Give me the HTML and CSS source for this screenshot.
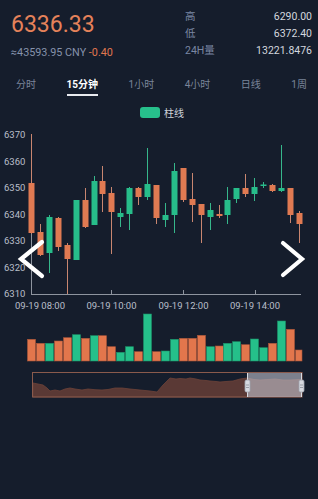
FILE: index.html
```html
<!DOCTYPE html>
<html lang="zh">
<head>
<meta charset="utf-8">
<title>K线</title>
<link rel="stylesheet" href="styles.css">
</head>
<body>
<div class="app">
  <header class="ticker">
    <div class="price-block">
      <div class="price">6336.33</div>
      <div class="sub"><span class="cny">≈43593.95 CNY</span> <span class="chg">-0.40</span></div>
    </div>
    <dl class="stats">
      <dt>高</dt><dd>6290.00</dd>
      <dt>低</dt><dd>6372.40</dd>
      <dt>24H量</dt><dd>13221.8476</dd>
    </dl>
  </header>

  <nav class="tabs">
    <span class="tab">分时</span>
    <span class="tab active">15分钟</span>
    <span class="tab">1小时</span>
    <span class="tab">4小时</span>
    <span class="tab">日线</span>
    <span class="tab">1周</span>
  </nav>

  <div class="legend"><span class="swatch"></span><span class="legend-text">柱线</span></div>

  <div class="chart">
    <svg class="chart-svg" width="318" height="290" viewBox="0 120 318 290" xmlns="http://www.w3.org/2000/svg">
      <!-- y axis labels -->
      <g class="axis-label">
        <text x="4" y="138.4">6370</text>
        <text x="4" y="164.9">6360</text>
        <text x="4" y="191.4">6350</text>
        <text x="4" y="217.9">6340</text>
        <text x="4" y="244.4">6330</text>
        <text x="4" y="270.9">6320</text>
        <text x="4" y="297.4">6310</text>
      </g>
      <g class="axis-label mid">
        <text x="40" y="308.5">09-19 08:00</text>
        <text x="111.5" y="308.5">09-19 10:00</text>
        <text x="183.5" y="308.5">09-19 12:00</text>
        <text x="255" y="308.5">09-19 14:00</text>
      </g>
      <!-- axes -->
      <g class="axis">
        <line x1="31.5" y1="134" x2="31.5" y2="294.5"/>
        <line x1="31" y1="294.5" x2="301" y2="294.5"/>
        <line x1="111.5" y1="290" x2="111.5" y2="294"/>
        <line x1="183.5" y1="290" x2="183.5" y2="294"/>
        <line x1="255.5" y1="290" x2="255.5" y2="294"/>
      </g>

      <!-- down candles (orange) -->
      <g class="down">
        <line x1="31.5" y1="134" x2="31.5" y2="234"/><rect x="28.5" y="183" width="6" height="50"/>
        <line x1="40.5" y1="224" x2="40.5" y2="256"/><rect x="37.5" y="232" width="6" height="23"/>
        <line x1="58.5" y1="217" x2="58.5" y2="251"/><rect x="55.5" y="218" width="6" height="29"/>
        <line x1="67.5" y1="243" x2="67.5" y2="294"/><rect x="64.5" y="245" width="6" height="14"/>
        <line x1="85.5" y1="188" x2="85.5" y2="228"/><rect x="82.5" y="200" width="6" height="27"/>
        <line x1="102.5" y1="166" x2="102.5" y2="212"/><rect x="99.5" y="181" width="6" height="13"/>
        <line x1="111.5" y1="187" x2="111.5" y2="254"/><rect x="108.5" y="193" width="6" height="19"/>
        <line x1="138.5" y1="187" x2="138.5" y2="205"/><rect x="135.5" y="188" width="6" height="9"/>
        <line x1="156.5" y1="185" x2="156.5" y2="224"/><rect x="153.5" y="185" width="6" height="33"/>
        <line x1="183.5" y1="168" x2="183.5" y2="202"/><rect x="180.5" y="168" width="6" height="32"/>
        <line x1="192.5" y1="173" x2="192.5" y2="222"/><rect x="189.5" y="199" width="6" height="6"/>
        <line x1="201.5" y1="204" x2="201.5" y2="243"/><rect x="198.5" y="204" width="6" height="11"/>
        <line x1="219.5" y1="205" x2="219.5" y2="218"/><rect x="216.5" y="214" width="6" height="2"/>
        <line x1="245.5" y1="174" x2="245.5" y2="197"/><rect x="242.5" y="188" width="6" height="6"/>
        <line x1="272.5" y1="184" x2="272.5" y2="192"/><rect x="269.5" y="185" width="6" height="6"/>
        <line x1="290.5" y1="188" x2="290.5" y2="223"/><rect x="287.5" y="188" width="6" height="27"/>
        <line x1="299.5" y1="211" x2="299.5" y2="243"/><rect x="296.5" y="213" width="6" height="11"/>
      </g>
      <!-- up candles (green) -->
      <g class="up">
        <line x1="49.5" y1="215" x2="49.5" y2="273"/><rect x="46.5" y="217" width="6" height="36"/>
        <line x1="76.5" y1="200" x2="76.5" y2="260"/><rect x="73.5" y="200" width="6" height="60"/>
        <line x1="94.5" y1="176" x2="94.5" y2="225"/><rect x="91.5" y="181" width="6" height="44"/>
        <line x1="120.5" y1="208" x2="120.5" y2="227"/><rect x="117.5" y="213" width="6" height="4"/>
        <line x1="129.5" y1="187" x2="129.5" y2="230"/><rect x="126.5" y="188" width="6" height="26"/>
        <line x1="147.5" y1="148" x2="147.5" y2="200"/><rect x="144.5" y="184" width="6" height="13"/>
        <line x1="165.5" y1="203" x2="165.5" y2="227"/><rect x="162.5" y="215" width="6" height="5"/>
        <line x1="174.5" y1="163" x2="174.5" y2="233"/><rect x="171.5" y="171" width="6" height="44"/>
        <line x1="210.5" y1="203" x2="210.5" y2="230"/><rect x="207.5" y="210" width="6" height="7"/>
        <line x1="227.5" y1="187" x2="227.5" y2="224"/><rect x="224.5" y="200" width="6" height="15"/>
        <line x1="236.5" y1="188" x2="236.5" y2="203"/><rect x="233.5" y="188" width="6" height="11"/>
        <line x1="254.5" y1="178" x2="254.5" y2="201"/><rect x="251.5" y="187" width="6" height="7"/>
        <line x1="263.5" y1="182" x2="263.5" y2="188"/><rect x="260.5" y="184.5" width="6" height="1.5"/>
        <line x1="281.5" y1="145" x2="281.5" y2="192"/><rect x="278.5" y="188" width="6" height="3"/>
      </g>

      <!-- volume bars -->
      <g class="vol">
        <rect class="vd" x="27.5" y="339.3" width="8" height="21.7"/>
        <rect class="vd" x="36.5" y="343.3" width="8" height="17.7"/>
        <rect class="vu" x="45.5" y="343.3" width="8" height="17.7"/>
        <rect class="vd" x="54.5" y="341" width="8" height="20"/>
        <rect class="vd" x="63.5" y="337.7" width="8" height="23.3"/>
        <rect class="vu" x="72.5" y="334.7" width="8" height="26.3"/>
        <rect class="vd" x="81.5" y="338.3" width="8" height="22.7"/>
        <rect class="vu" x="90.5" y="335.7" width="8" height="25.3"/>
        <rect class="vd" x="98.5" y="335.7" width="8" height="25.3"/>
        <rect class="vd" x="107.5" y="346.7" width="8" height="14.3"/>
        <rect class="vu" x="116.5" y="352.3" width="8" height="8.7"/>
        <rect class="vu" x="125.5" y="346.7" width="8" height="14.3"/>
        <rect class="vd" x="134.5" y="351.7" width="8" height="9.3"/>
        <rect class="vu" x="143.5" y="314" width="8" height="47"/>
        <rect class="vd" x="152.5" y="351.7" width="8" height="9.3"/>
        <rect class="vu" x="161.5" y="351" width="8" height="10"/>
        <rect class="vu" x="170.5" y="339.3" width="8" height="21.7"/>
        <rect class="vd" x="179.5" y="338.3" width="8" height="22.7"/>
        <rect class="vd" x="188.5" y="338.3" width="8" height="22.7"/>
        <rect class="vd" x="197.5" y="335.3" width="8" height="25.7"/>
        <rect class="vu" x="206.5" y="346.7" width="8" height="14.3"/>
        <rect class="vd" x="215.5" y="346" width="8" height="15"/>
        <rect class="vu" x="223.5" y="343.3" width="8" height="17.7"/>
        <rect class="vu" x="232.5" y="341.7" width="8" height="19.3"/>
        <rect class="vd" x="241.5" y="344.7" width="8" height="16.3"/>
        <rect class="vu" x="250.5" y="339" width="8" height="22"/>
        <rect class="vu" x="259.5" y="347.7" width="8" height="13.3"/>
        <rect class="vd" x="268.5" y="343.3" width="8" height="17.7"/>
        <rect class="vu" x="277.5" y="321" width="8" height="40"/>
        <rect class="vd" x="286.5" y="329.3" width="8" height="31.7"/>
        <rect class="vd" x="295.5" y="350" width="6.5" height="11"/>
      </g>

      <!-- data zoom slider -->
      <g class="slider">
        <path class="slider-area" d="M33,397 L33,383 L38,384 L43,385 L47,388 L50,391 L55,390 L60,391 L65,389 L70,388 L75,389 L82,390 L88,389 L95,389.7 L102,390 L108,389.5 L115,388 L122,388 L130,389 L140,390 L150,391 L157,392 L163,385 L170,378 L176,379 L180,378.5 L186,379 L190,378 L196,379 L200,380 L206,380.5 L210,381 L216,381.5 L220,382 L226,381.5 L233,381 L240,379 L247,378 L254,379.5 L260,380 L268,379.5 L275,379 L283,380 L290,380 L301,379.5 L301,397 Z"/>
        <rect class="slider-frame" x="32.5" y="372.5" width="269.5" height="24.5"/>
        <rect class="slider-sel" x="247" y="373" width="55" height="24"/>
        <line class="handle-line" x1="247.5" y1="373" x2="247.5" y2="397"/>
        <line class="handle-line" x1="301.5" y1="373" x2="301.5" y2="397"/>
        <rect class="handle" x="245" y="380" width="5" height="12" rx="1.5"/>
        <rect class="handle" x="299" y="380" width="5" height="12" rx="1.5"/>
        <line class="grip" x1="246" y1="385" x2="249" y2="385"/>
        <line class="grip" x1="246" y1="387.5" x2="249" y2="387.5"/>
        <line class="grip" x1="300" y1="385" x2="303" y2="385"/>
        <line class="grip" x1="300" y1="387.5" x2="303" y2="387.5"/>
      </g>
    </svg>

    <button class="nav prev" aria-label="上一页">
      <svg width="32" height="42" viewBox="0 0 32 42"><polyline points="28,3 7,20 28,37"/></svg>
    </button>
    <button class="nav next" aria-label="下一页">
      <svg width="32" height="42" viewBox="0 0 32 42"><polyline points="7,4 26,20 7,36"/></svg>
    </button>
  </div>
</div>
</body>
</html>
```

FILE: styles.css
```css
html, body {
  margin: 0;
  padding: 0;
  background: #151d2c;
}

body {
  font-family: Roboto, "Noto Sans CJK SC", sans-serif;
}

.app {
  width: 318px;
  height: 499px;
  overflow: hidden;
  background: #151d2c;
}

/* header */
.ticker {
  display: flex;
  justify-content: space-between;
  height: 66px;
  padding: 0 6px 0 11px;
  box-sizing: border-box;
}

.price {
  font-size: 23px;
  line-height: 26px;
  color: #e5825a;
  margin-top: 12px;
}

.sub {
  font-size: 10.8px;
  line-height: 14px;
  margin-top: 8px;
  color: #8592ab;
}

.chg {
  color: #e0774f;
}

.stats {
  margin: 0;
  padding-top: 8px;
  width: 127px;
  display: grid;
  grid-template-columns: auto 1fr;
  grid-auto-rows: 17px;
  align-content: start;
  font-size: 10.5px;
  line-height: 17px;
}

.stats dt {
  color: #7a87a3;
}

.stats dd {
  margin: 0;
  text-align: right;
  color: #d3d7df;
}

/* tabs */
.tabs {
  display: flex;
  justify-content: space-between;
  padding: 12px 11px 0 16px;
  font-size: 10px;
  line-height: 14px;
  color: #7b859a;
}

.tab {
  padding-bottom: 2px;
  border-bottom: 2px solid transparent;
}

.tab.active {
  color: #ffffff;
  font-weight: 700;
  border-bottom-color: #e8eaef;
}

/* legend */
.legend {
  display: flex;
  justify-content: center;
  align-items: center;
  gap: 4px;
  height: 16px;
  margin-top: 8px;
  padding-left: 6px;
  font-size: 10px;
  color: #d0d4dc;
}

.swatch {
  width: 20px;
  height: 11px;
  border-radius: 3px;
  background: #27c08c;
}

/* chart */
.chart {
  position: relative;
  height: 290px;
}

.chart-svg {
  display: block;
}

.axis-label {
  font-family: Roboto, sans-serif;
  font-size: 9.5px;
  fill: #b9bfca;
}

.axis-label.mid {
  text-anchor: middle;
}

.axis line {
  stroke: #8e949f;
  stroke-width: 1;
}

.down rect {
  fill: #e07a52;
}

.down line {
  stroke: #c98670;
  stroke-width: 1;
}

.up rect {
  fill: #27bd8a;
}

.up line {
  stroke: #36b78b;
  stroke-width: 1;
}

.vol rect {
  stroke-width: 0.6;
}

.vol .vd {
  fill: #e2764c;
  stroke: #a8553a;
}

.vol .vu {
  fill: #25c08a;
  stroke: #1c8f68;
}

.slider-area {
  fill: #5a3935;
  stroke: #6d4239;
  stroke-width: 0.8;
}

.slider-frame {
  fill: none;
  stroke: #8a5a4c;
  stroke-width: 1;
}

.slider-sel {
  fill: rgba(200, 200, 212, 0.58);
}

.handle-line {
  stroke: #d8dbe2;
  stroke-width: 1;
}

.handle {
  fill: #d6d9e0;
  stroke: #9da2ad;
  stroke-width: 0.8;
}

.grip {
  stroke: #8a8f9a;
  stroke-width: 0.8;
}

/* nav chevrons */
.nav {
  position: absolute;
  top: 119px;
  width: 32px;
  height: 42px;
  padding: 0;
  margin: 0;
  border: 0;
  background: none;
  cursor: pointer;
}

.nav svg {
  display: block;
}

.nav polyline {
  fill: none;
  stroke: #ffffff;
  stroke-width: 4.2;
  stroke-linecap: round;
  stroke-linejoin: miter;
}

.prev {
  left: 14px;
}

.next {
  left: 276px;
}
```
